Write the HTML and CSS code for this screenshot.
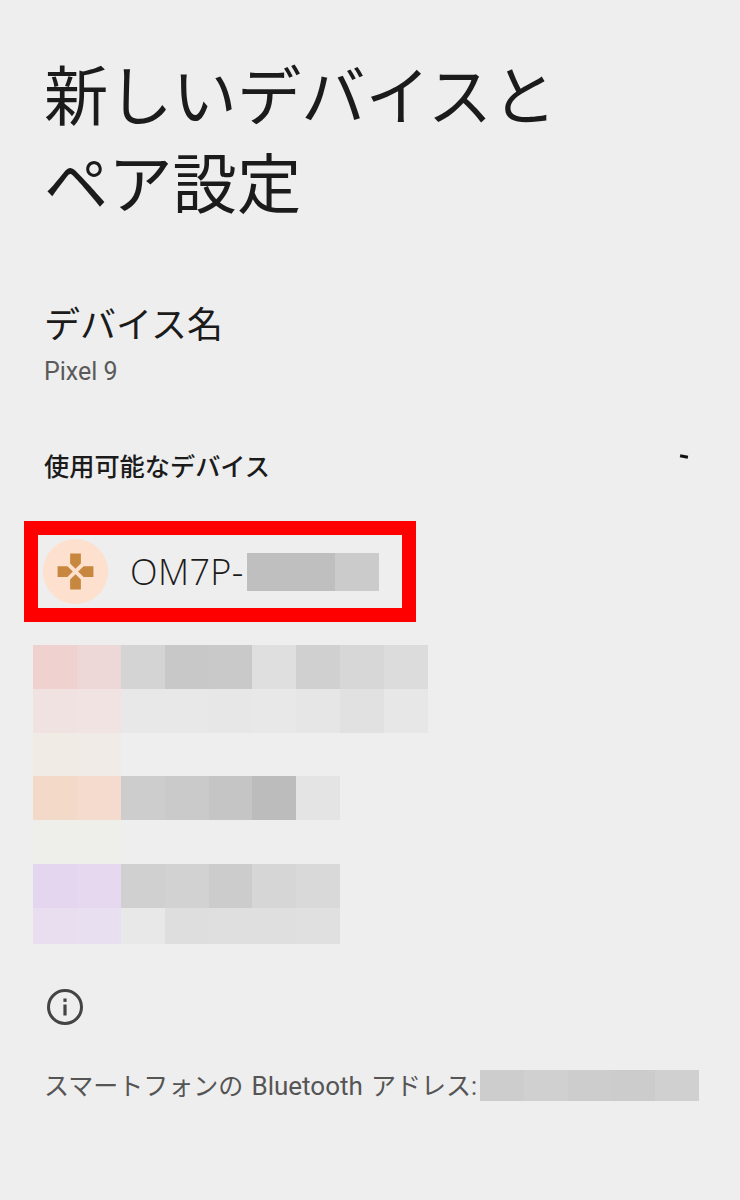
FILE: index.html
```html
<!DOCTYPE html>
<html lang="ja">
<head>
  <meta charset="UTF-8" />
  <meta name="viewport" content="width=device-width, initial-scale=1.0"/>
  <title>新しいデバイスとペア設定</title>
  <link rel="stylesheet" href="styles.css">
</head>
<body>
  <h1 class="page-title">新しいデバイスと<br>ペア設定</h1>

  <div class="device-name">
    <div class="device-name-label">デバイス名</div>
    <div class="device-name-value">Pixel 9</div>
  </div>

  <div class="section-head">
    <h2>使用可能なデバイス</h2>
    <span class="spinner-tick"></span>
  </div>

  <div class="highlight-frame">
    <div class="device-row">
      <span class="device-icon">
        <svg viewBox="0 0 24 24" width="43" height="43" aria-hidden="true">
          <path fill="#c8873f" d="M15 7.5V2H9v5.5l3 3 3-3zM7.5 9H2v6h5.5l3-3-3-3zM9 16.5V22h6v-5.5l-3-3-3 3zM16.5 9l-3 3 3 3H22V9h-5.5z"/>
        </svg>
      </span>
      <span class="device-label">OM7P-</span>
      <span class="device-mask">
        <i class="mask-wide"></i>
        <i class="mask-narrow"></i>
      </span>
    </div>
  </div>

  <div class="mosaic">
    <div class="mosaic-row">
      <i class="c-efd2cf"></i><i class="c-eed7d7"></i><i class="c-d4"></i><i class="c-c8"></i><i class="c-c9"></i><i class="c-df"></i><i class="c-d0"></i><i class="c-d7"></i><i class="c-dc"></i>
    </div>
    <div class="mosaic-row">
      <i class="c-efe2e0"></i><i class="c-f0e3e2"></i><i class="c-e8"></i><i class="c-e8"></i><i class="c-e7"></i><i class="c-e8"></i><i class="c-e6"></i><i class="c-e1"></i><i class="c-e7"></i>
    </div>
    <div class="mosaic-row">
      <i class="c-f1ebe6"></i><i class="c-f1ebe7"></i>
    </div>
    <div class="mosaic-row">
      <i class="c-f3d9c8"></i><i class="c-f5dbcd"></i><i class="c-cd"></i><i class="c-ca"></i><i class="c-c5"></i><i class="c-bc"></i><i class="c-e4"></i>
    </div>
    <div class="mosaic-row">
      <i class="c-eeeeeb"></i><i class="c-eeeeeb"></i>
    </div>
    <div class="mosaic-row">
      <i class="c-e3d6ee"></i><i class="c-e6d8ee"></i><i class="c-d0"></i><i class="c-d2"></i><i class="c-cc"></i><i class="c-d6"></i><i class="c-d9"></i>
    </div>
    <div class="mosaic-row mosaic-row-last">
      <i class="c-e9deef"></i><i class="c-e8e0f0"></i><i class="c-e8"></i><i class="c-de"></i><i class="c-df"></i><i class="c-df"></i><i class="c-e0"></i>
    </div>
  </div>

  <svg class="info-icon" viewBox="0 0 36 36" width="36" height="36" aria-hidden="true">
    <circle cx="18" cy="18" r="16.5" fill="none" stroke="#444" stroke-width="3"/>
    <rect x="16.4" y="15.5" width="3.2" height="11" fill="#444"/>
    <rect x="16.4" y="9.5" width="3.2" height="3.4" fill="#444"/>
  </svg>

  <div class="bt-address">
    <span class="bt-text">スマートフォンの <span class="bt-latin">Bluetooth</span> アドレス:</span>
    <span class="bt-mask"><i class="c-cd"></i><i class="c-d0"></i><i class="c-cd"></i><i class="c-cc"></i><i class="c-d0"></i></span>
  </div>
</body>
</html>
```

FILE: styles.css
```css
* {
  margin: 0;
  padding: 0;
  box-sizing: border-box;
}

body {
  width: 740px;
  height: 1200px;
  overflow: hidden;
  background: #eeeeee;
  color: #1b1b1b;
  font-family: Roboto, "Noto Sans CJK JP", sans-serif;
}

.page-title {
  padding: 54px 0 0 44px;
  font-size: 64.3px;
  font-weight: 400;
  line-height: 88px;
}

.device-name {
  padding: 71px 0 0 44px;
}

.device-name-label {
  font-size: 36px;
  line-height: 50px;
}

.device-name-value {
  margin-top: 3px;
  font-size: 25px;
  line-height: 36px;
  color: #5a5a5a;
}

.section-head {
  display: flex;
  justify-content: space-between;
  padding: 60px 52px 0 44px;
}

.section-head h2 {
  font-size: 25.2px;
  font-weight: 500;
  line-height: 36px;
}

.spinner-tick {
  width: 8px;
  height: 3px;
  margin-top: 5px;
  background: #111;
  transform: rotate(12deg);
}

.highlight-frame {
  width: 392px;
  height: 101px;
  margin: 35px 0 0 24px;
  border: 14px solid #ff0000;
}

.device-row {
  display: flex;
  align-items: center;
  height: 73px;
  padding-left: 5px;
}

.device-icon {
  display: flex;
  align-items: center;
  justify-content: center;
  width: 65px;
  height: 65px;
  border-radius: 50%;
  background: #fde0cd;
}

.device-label {
  width: 117px;
  margin-left: 22px;
  font-family: "Open Sans", Roboto, sans-serif;
  font-size: 36px;
  font-weight: 300;
  letter-spacing: 0.4px;
  white-space: nowrap;
}

.device-mask {
  display: flex;
  height: 38px;
}

.device-mask i {
  display: block;
}

.mask-wide {
  width: 88px;
  background: #bfbfbf;
}

.mask-narrow {
  width: 44px;
  background: #cbcbcb;
}

/* blurred device list */
.mosaic {
  margin: 23px 0 0 33px;
}

.mosaic-row {
  display: flex;
  height: 43.8px;
}

.mosaic-row-last {
  height: 36px;
}

.mosaic-row i {
  display: block;
  width: 43.9px;
}

.c-efd2cf { background: #efd2cf; }
.c-eed7d7 { background: #eed7d7; }
.c-efe2e0 { background: #efe2e0; }
.c-f0e3e2 { background: #f0e3e2; }
.c-f1ebe6 { background: #f1ebe6; }
.c-f1ebe7 { background: #f1ebe7; }
.c-f3d9c8 { background: #f3d9c8; }
.c-f5dbcd { background: #f5dbcd; }
.c-eeeeeb { background: #eeeeeb; }
.c-e3d6ee { background: #e3d6ee; }
.c-e6d8ee { background: #e6d8ee; }
.c-e9deef { background: #e9deef; }
.c-e8e0f0 { background: #e8e0f0; }
.c-bc { background: #bcbcbc; }
.c-c5 { background: #c5c5c5; }
.c-c8 { background: #c8c8c8; }
.c-c9 { background: #c9c9c9; }
.c-ca { background: #cacaca; }
.c-cc { background: #cccccc; }
.c-cd { background: #cdcdcd; }
.c-d0 { background: #d0d0d0; }
.c-d2 { background: #d2d2d2; }
.c-d4 { background: #d4d4d4; }
.c-d6 { background: #d6d6d6; }
.c-d7 { background: #d7d7d7; }
.c-d9 { background: #d9d9d9; }
.c-dc { background: #dcdcdc; }
.c-de { background: #dedede; }
.c-df { background: #dfdfdf; }
.c-e0 { background: #e0e0e0; }
.c-e1 { background: #e1e1e1; }
.c-e4 { background: #e4e4e4; }
.c-e6 { background: #e6e6e6; }
.c-e7 { background: #e7e7e7; }
.c-e8 { background: #e8e8e8; }

.info-icon {
  display: block;
  margin: 45px 0 0 47px;
}

.bt-address {
  display: flex;
  align-items: center;
  height: 31px;
  margin: 45px 0 0 44px;
  font-size: 25px;
  color: #555555;
}

.bt-text {
  width: 436px;
  padding-bottom: 3px;
  white-space: nowrap;
  word-spacing: 2px;
}

.bt-latin {
  font-size: 26px;
}

.bt-mask {
  display: flex;
  width: 219px;
  height: 31px;
}

.bt-mask i {
  display: block;
  flex: 1;
}
```
